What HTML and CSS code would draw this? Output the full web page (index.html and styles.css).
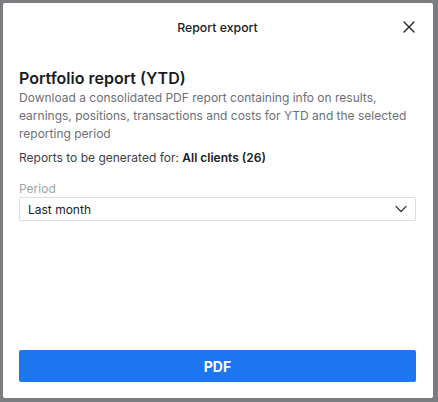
FILE: index.html
```html
<!DOCTYPE html>
<html lang="en">
<head>
<meta charset="utf-8">
<title>Report export</title>
<link rel="stylesheet" href="styles.css">
</head>
<body>
<div class="backdrop">
  <div class="modal">
    <div class="modal-header">
      <span class="modal-title">Report export</span>
      <button class="close" aria-label="Close">
        <svg width="12" height="12" viewBox="0 0 12 12"><path d="M1 1L11 11M11 1L1 11" stroke="#1f2329" stroke-width="1.4" stroke-linecap="round"/></svg>
      </button>
    </div>
    <div class="modal-body">
      <h2 class="report-title">Portfolio report (YTD)</h2>
      <p class="desc">Download a consolidated PDF report containing info on results, earnings, positions, transactions and costs for YTD and the selected reporting period</p>
      <p class="target">Reports to be generated for: <strong>All clients (26)</strong></p>
      <label class="field-label">Period</label>
      <div class="select">
        <span>Last month</span>
        <svg width="12" height="8" viewBox="0 0 12 8"><path d="M1 1.5L6 6.5L11 1.5" fill="none" stroke="#3c4043" stroke-width="1.3" stroke-linecap="round" stroke-linejoin="round"/></svg>
      </div>
    </div>
    <div class="modal-footer">
      <button class="btn-primary">PDF</button>
    </div>
  </div>
</div>
</body>
</html>
```

FILE: styles.css
```css
* { box-sizing: border-box; }
html, body { margin: 0; padding: 0; }
body {
  background: #7b7c80;
  font-family: Inter, "Noto Sans", sans-serif;
  width: 438px;
  height: 402px;
  overflow: hidden;
}
.backdrop {
  padding: 3px 5px 4px 3px;
  height: 402px;
}
.modal {
  background: #fff;
  border-radius: 2px;
  width: 430px;
  height: 395px;
  display: flex;
  flex-direction: column;
  padding: 0 17px 16px 16px;
}
.modal-header {
  height: 48px;
  display: flex;
  align-items: center;
  justify-content: center;
  position: relative;
}
.modal-title {
  font-size: 12.3px;
  font-weight: 500;
  color: #202124;
}
.close {
  position: absolute;
  right: 0;
  top: 17px;
  width: 14px;
  height: 14px;
  padding: 0;
  border: 0;
  background: none;
  display: flex;
  align-items: center;
  justify-content: center;
}
.modal-body {
  flex: 1;
  padding-top: 17px;
}
.report-title {
  margin: 0;
  font-size: 16px;
  font-weight: 600;
  color: #1a1c1f;
  line-height: 20px;
}
.desc {
  margin: 1px 0 0;
  font-size: 12px;
  line-height: 18px;
  color: #6b6f76;
}
.target {
  margin: 6px 0 0;
  font-size: 12px;
  line-height: 18px;
  color: #3c4043;
}
.target strong { font-weight: 600; color: #202124; }
.field-label {
  display: block;
  margin-top: 14px;
  font-size: 12px;
  line-height: 15px;
  color: #a0a3a8;
}
.select {
  margin-top: 1px;
  height: 24px;
  border: 1px solid #dadde3;
  border-radius: 2px;
  display: flex;
  align-items: center;
  justify-content: space-between;
  padding: 0 8px 0 8px;
  font-size: 12px;
  color: #202124;
}
.modal-footer { display: flex; }
.btn-primary {
  flex: 1;
  height: 32px;
  border: 0;
  border-radius: 2px;
  background: #1b76ef;
  color: #fff;
  font-family: inherit;
  font-size: 14px;
  font-weight: 700;
}
```
